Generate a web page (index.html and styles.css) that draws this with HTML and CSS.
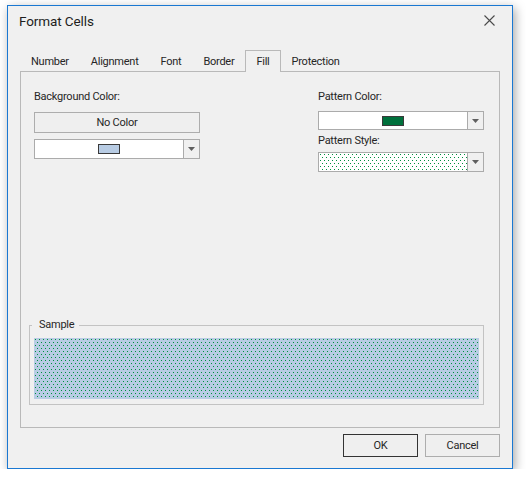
FILE: index.html
```html
<!DOCTYPE html>
<html>
<head>
<meta charset="utf-8">
<title>Format Cells</title>
<link rel="stylesheet" href="styles.css">
</head>
<body>
<svg class="defs" width="0" height="0">
  <defs>
    <pattern id="dotpat" width="4" height="6" patternUnits="userSpaceOnUse">
      <rect x="1" y="1" width="1" height="1" fill="#009040"/>
      <rect x="3" y="4" width="1" height="1" fill="#009040"/>
    </pattern>
  </defs>
</svg>
<div class="window">
  <div class="titlebar">
    <span class="title">Format Cells</span>
    <svg class="close" width="11" height="11" viewBox="0 0 11 11"><path d="M0.5 0.5L10.5 10.5M10.5 0.5L0.5 10.5" stroke="#4a4a4a" stroke-width="1.1" fill="none"/></svg>
  </div>
  <div class="content">
    <div class="tabs">
      <div class="tab">Number</div>
      <div class="tab">Alignment</div>
      <div class="tab">Font</div>
      <div class="tab">Border</div>
      <div class="tab active">Fill</div>
      <div class="tab">Protection</div>
    </div>
    <div class="panel">
      <div class="cols">
        <div class="col">
          <div class="label">Background Color:</div>
          <div class="btn nocolor">No Color</div>
          <div class="combo combo-bg">
            <div class="field"><span class="swatch swatch-blue"></span></div>
            <div class="drop"><svg width="7" height="4" viewBox="0 0 7 4"><path d="M0 0H7L3.5 4Z" fill="#5f5f5f"/></svg></div>
          </div>
        </div>
        <div class="col">
          <div class="label">Pattern Color:</div>
          <div class="combo combo-pc">
            <div class="field"><span class="swatch swatch-green"></span></div>
            <div class="drop"><svg width="7" height="4" viewBox="0 0 7 4"><path d="M0 0H7L3.5 4Z" fill="#5f5f5f"/></svg></div>
          </div>
          <div class="label label-style">Pattern Style:</div>
          <div class="combo combo-ps">
            <div class="field dots"><svg class="pat" shape-rendering="crispEdges"><rect width="100%" height="100%" fill="url(#dotpat)"/></svg></div>
            <div class="drop"><svg width="7" height="4" viewBox="0 0 7 4"><path d="M0 0H7L3.5 4Z" fill="#5f5f5f"/></svg></div>
          </div>
        </div>
      </div>
      <fieldset class="sample">
        <legend>Sample</legend>
        <div class="sample-fill"><svg class="pat" shape-rendering="crispEdges"><rect width="100%" height="100%" fill="url(#dotpat)"/></svg></div>
      </fieldset>
    </div>
    <div class="buttons">
      <div class="btn dlg ok">OK</div>
      <div class="btn dlg">Cancel</div>
    </div>
  </div>
</div>
</body>
</html>
```

FILE: styles.css
```css
* { box-sizing: border-box; }

body {
  margin: 0;
  background: #ffffff;
  font-family: Roboto, "Liberation Sans", sans-serif;
  font-size: 11px;
  letter-spacing: -0.25px;
  color: #262626;
}

.defs {
  display: block;
  width: 0;
  height: 0;
  overflow: hidden;
  float: left;
}

.window {
  margin: 5px 0 0 7px;
  width: 506px;
  height: 464px;
  border: 1px solid #1a78d2;
  background: #f0f0f0;
  box-shadow: 2px 3px 10px rgba(0, 0, 0, 0.35);
  display: flex;
  flex-direction: column;
}

.titlebar {
  height: 44px;
  flex: none;
  display: flex;
  justify-content: space-between;
  align-items: flex-start;
  padding: 6px 17px 0 11px;
}

.title {
  font-size: 13.5px;
  line-height: 18px;
  letter-spacing: -0.1px;
  color: #1e1e1e;
}

.close { margin-top: 3px; }

.content {
  flex: 1;
  padding: 0 12px;
  display: flex;
  flex-direction: column;
}

.tabs {
  display: flex;
  height: 21px;
  flex: none;
}

.tab {
  height: 21px;
  line-height: 21px;
  padding: 0 10px;
  border: 1px solid transparent;
  border-bottom: none;
}

.tab.active {
  height: 22px;
  border-color: #b9b9b9;
  background: #f0f0f0;
  position: relative;
  z-index: 1;
}

.panel {
  height: 357px;
  flex: none;
  border: 1px solid #b9b9b9;
  display: flex;
  flex-direction: column;
  padding-top: 18px;
}

.cols {
  display: flex;
  justify-content: space-between;
  padding: 0 15px 0 13px;
}

.col {
  width: 166px;
  display: flex;
  flex-direction: column;
}

.label {
  height: 14px;
  line-height: 14px;
}

.label-style { margin-top: 4px; }

.btn {
  display: flex;
  align-items: center;
  justify-content: center;
  border: 1px solid #adadad;
  background: #efefef;
}

.nocolor {
  margin-top: 8px;
  height: 21px;
}

.combo {
  display: flex;
  border: 1px solid #ababab;
  background: #ffffff;
}

.combo-bg { margin-top: 6px; height: 20px; }
.combo-pc { margin-top: 7px; height: 19px; }
.combo-ps { margin-top: 4px; height: 20px; }

.field {
  flex: 1;
  display: flex;
  align-items: center;
  justify-content: center;
}

.drop {
  width: 16px;
  border-left: 1px solid #ababab;
  background: #f0f0f0;
  display: flex;
  align-items: center;
  justify-content: center;
}

.swatch {
  width: 22px;
  height: 10px;
  border: 1px solid #3a3a3a;
}

.swatch-blue { background: #b8cce4; }
.swatch-green { background: #00703c; }

.dots {
  background: #ffffff;
  align-items: stretch;
}

.pat {
  display: block;
  width: 100%;
  height: 100%;
}

.sample {
  margin: auto 15px 22px 8px;
  border: 1px solid #c3c3c3;
  padding: 6px 4px 5px;
  min-width: 0;
}

.sample legend {
  padding: 0 5px 0 7px;
  margin-left: -2px;
  line-height: 14px;
}

.sample-fill {
  height: 61px;
  background: #b8cce4;
}

.buttons {
  display: flex;
  justify-content: flex-end;
  gap: 7px;
  margin-top: 6px;
}

.dlg {
  width: 75px;
  height: 23px;
}

.ok { border-color: #333333; }
```
